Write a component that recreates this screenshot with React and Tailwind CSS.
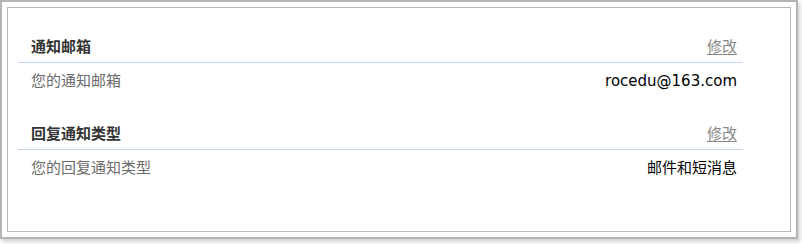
import React from "react";

const sections = [
	{ title: "通知邮箱", label: "您的通知邮箱", value: "rocedu@163.com" },
	{ title: "回复通知类型", label: "您的回复通知类型", value: "邮件和短消息" },
];

const App = () => {
	return (
		<div className="w-[802px] h-[244px] bg-white font-['DejaVu_Sans','Noto_Sans_CJK_SC',sans-serif]">
			{/* outer frame */}
			<div className="w-[798px] h-[239px] border-2 border-[#b4b4b4] p-[5px] flex shadow-[2px_3px_4px_rgba(0,0,0,0.18)]">
				{/* inner frame */}
				<div className="flex-1 border border-[#bababa] pt-[29px] pl-[10px] pr-[47px] flex flex-col gap-[33px]">
					{sections.map((s) => (
						<div key={s.title} className="flex flex-col">
							<div className="flex justify-between items-center border-b border-[#c6d5ea] pl-[13px] pr-[6px] pb-[5px] leading-[20px] text-[15px]">
								<span className="font-bold text-[#333]">{s.title}</span>
								<a className="text-[#888] underline underline-offset-2 cursor-pointer">修改</a>
							</div>
							<div className="flex justify-between items-center pl-[13px] pr-[6px] pt-[8px] leading-[20px] text-[15px]">
								<span className="text-[#6b6b6b]">{s.label}</span>
								<span className="text-black">{s.value}</span>
							</div>
						</div>
					))}
				</div>
			</div>
		</div>
	);
};

export default App;
